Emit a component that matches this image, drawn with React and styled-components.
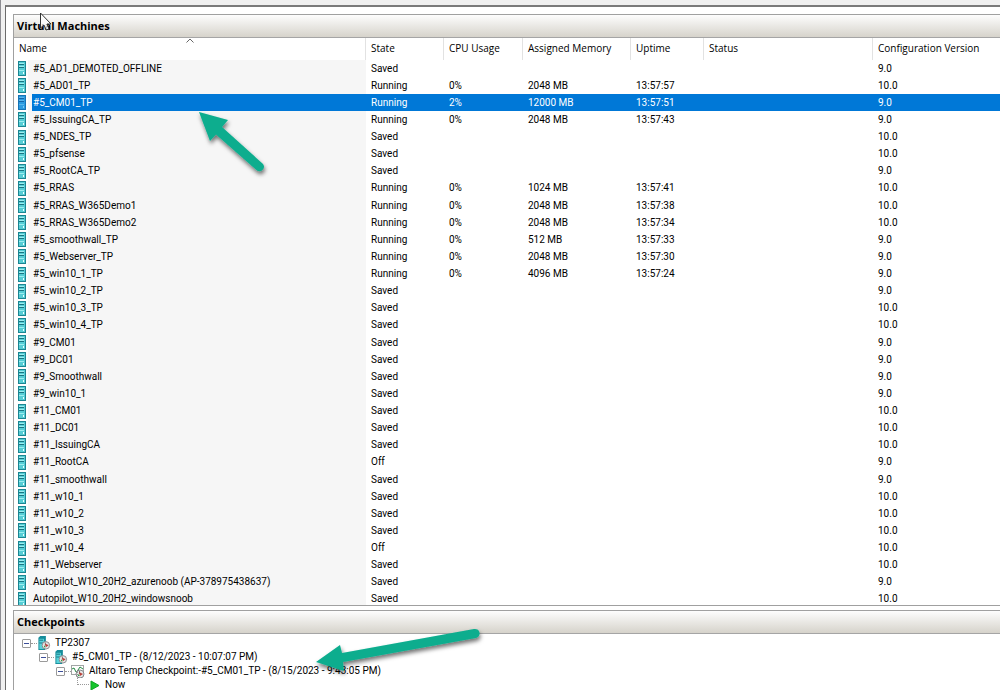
import React, { useState } from 'react';
import styled, { createGlobalStyle } from 'styled-components';

const GlobalStyle = createGlobalStyle`
  * {
    box-sizing: border-box;
  }
  body {
    margin: 0;
    overflow: hidden;
    background: #fff;
    color: #000;
    font: 10px/12px Roboto, "Liberation Sans", sans-serif;
  }
`;

const Shell = styled.div`
  position: relative;
  height: 100vh;
  overflow: hidden;
  padding: 5px 0 0 4px;
  background: #f0f0f0;
  border-left: 1px solid #8d8d92;
`;
const Workspace = styled.main`
  min-height: 100%;
  padding: 7px 0 0 7px;
  background: #fff;
  border-top: 2px solid #7a7a7a;
  border-left: 1px solid #6b6b6b;
`;
const Panel = styled.section`
  margin-bottom: 4px;
  border: 1px solid #a0a0a0;
  border-right: 0;
`;
const PanelTitle = styled.h2`
  height: 23px;
  margin: 0;
  padding: 0 3px;
  background: linear-gradient(#fdfdfd, #d6d3cb);
  border-bottom: 1px solid #a5a5a5;
  font: bold 11px/22px "Open Sans", "Noto Sans", sans-serif;
  color: #000;
`;

// the last row runs a little under the lower edge of the list
const ListView = styled.div`
  height: 567px;
  overflow: hidden;
`;
const Table = styled.table`
  width: 100%;
  height: 570px;
  table-layout: fixed;
  border-collapse: separate;
  border-spacing: 0;
`;
const HeadCell = styled.th`
  position: relative;
  height: 22px;
  padding: 0 5px;
  border-right: 1px solid #e2e2e2;
  font: 10px/20px "Open Sans", "Noto Sans", sans-serif;
  color: #000;
  text-align: left;
  vertical-align: top;
  white-space: nowrap;

  &:last-child {
    border-right: 0;
  }
`;
const SortMark = styled.svg`
  position: absolute;
  top: 0;
  left: 50%;
  width: 8px;
  height: 5px;
  margin-left: -4px;
`;
const Row = styled.tr`
  color: ${p => p.$selected ? '#fff' : '#000'};
  background: ${p => p.$selected ? '#0078d7' : '#fff'};
`;
const Cell = styled.td`
  padding: 0 5px;
  white-space: nowrap;
`;
const NameCell = styled(Cell)`
  padding: 0 1px;
  background: ${p => p.$selected ? '#0078d7' : '#f6f6f6'};
`;
const IconCell = styled.td`
  padding: 0 0 0 4px;
  background: linear-gradient(to right, #fff 14px, #f6f6f6 14px);

  svg {
    display: block;
  }
`;

const Tree = styled.ul`
  margin: 0;
  padding: 2px 0 0 8px;
  list-style: none;
`;
const Branch = styled.ul`
  margin: 0;
  padding: 0 0 0 17px;
  list-style: none;
`;
const Node = styled.div`
  display: flex;
  align-items: center;
  height: 14px;
  line-height: 10px;
  white-space: nowrap;
`;
const Toggle = styled.button`
  display: grid;
  place-items: center;
  width: 9px;
  height: 9px;
  padding: 0;
  border: 1px solid #9a9a9a;
  border-radius: 1px;
  background: #fff;

  &::before {
    content: '';
    width: 5px;
    height: 1px;
    background: #3c4f9a;
  }
`;
const Link = styled.span`
  width: 6px;
  border-top: 1px dotted #999;
`;
const Elbow = styled.span`
  width: 12px;
  height: 14px;
  margin: -14px 1px 0 4px;
  border: dotted #999;
  border-width: 0 0 1px 1px;
`;
const Label = styled.span`
  padding-left: 4px;
`;
const Overlay = styled.svg`
  position: absolute;
  top: 0;
  left: -1px;
  width: 1000px;
  height: 690px;
  pointer-events: none;
`;

const ServerIcon = ({ selected }) => (
  <svg width="8" height="15" viewBox="0 0 8 15">
    <rect width="8" height="15" fill={selected ? '#1673b5' : '#1b8592'}/>
    <rect x="1" y="1" width="6" height="13" fill={selected ? '#2b9be0' : '#56cdd5'}/>
    <path d="M1 3.500h5M1 6.500h5" stroke={selected ? '#1465a8' : '#187582'}/>
    <path d="M1 2.500h5M1 5.500h5M1 9.500h5" stroke={selected ? '#58b6ec' : '#9ceef0'}/>
    <rect x="5" y="11" width="1" height="2" fill={selected ? '#7cc8f4' : '#e8ffff'}/>
  </svg>
);

const Gauge = () => (
  <g>
    <circle cx="9" cy="10" r="4" fill="#e6e6e6" stroke="#85898c"/>
    <path d="M8.500 7v3" stroke="#777"/>
    <path d="M8 8l4 2-3 2z" fill="#b8413a"/>
    <path d="M7 10l2 2H7z" fill="#2c9b40"/>
  </g>
);

const HostIcon = () => (
  <svg width="14" height="14" viewBox="0 0 14 15">
    <path d="M1 2l2-2h6v13l-1 2H1z" fill="#168c9a"/>
    <path d="M2 3h5v11H2z" fill="#58d3da"/>
    <path d="M2 4.500h4M2 7.500h4" stroke="#147381"/>
    <Gauge/>
  </svg>
);

const CheckpointIcon = () => (
  <svg width="14" height="14" viewBox="0 0 14 14">
    <rect x=".5" y="1.500" width="12" height="9" fill="#fff" stroke="#a1a5a5"/>
    <path d="M1 5l2-1 2 4 2-2 2-3 3 2" fill="none" stroke="#238a43"/>
    <Gauge/>
  </svg>
);

// name, state, memory, uptime, version, cpu
const machines = [
  ['#5_AD1_DEMOTED_OFFLINE', 'Saved', '', '', '9.0'],
  ['#5_AD01_TP', 'Running', '2048 MB', '13:57:57', '10.0', '0%'],
  ['#5_CM01_TP', 'Running', '12000 MB', '13:57:51', '9.0', '2%'],
  ['#5_IssuingCA_TP', 'Running', '2048 MB', '13:57:43', '9.0', '0%'],
  ['#5_NDES_TP', 'Saved', '', '', '10.0'],
  ['#5_pfsense', 'Saved', '', '', '10.0'],
  ['#5_RootCA_TP', 'Saved', '', '', '9.0'],
  ['#5_RRAS', 'Running', '1024 MB', '13:57:41', '10.0', '0%'],
  ['#5_RRAS_W365Demo1', 'Running', '2048 MB', '13:57:38', '10.0', '0%'],
  ['#5_RRAS_W365Demo2', 'Running', '2048 MB', '13:57:34', '10.0', '0%'],
  ['#5_smoothwall_TP', 'Running', '512 MB', '13:57:33', '9.0', '0%'],
  ['#5_Webserver_TP', 'Running', '2048 MB', '13:57:30', '9.0', '0%'],
  ['#5_win10_1_TP', 'Running', '4096 MB', '13:57:24', '9.0', '0%'],
  ['#5_win10_2_TP', 'Saved', '', '', '9.0'],
  ['#5_win10_3_TP', 'Saved', '', '', '10.0'],
  ['#5_win10_4_TP', 'Saved', '', '', '10.0'],
  ['#9_CM01', 'Saved', '', '', '9.0'],
  ['#9_DC01', 'Saved', '', '', '9.0'],
  ['#9_Smoothwall', 'Saved', '', '', '9.0'],
  ['#9_win10_1', 'Saved', '', '', '9.0'],
  ['#11_CM01', 'Saved', '', '', '10.0'],
  ['#11_DC01', 'Saved', '', '', '10.0'],
  ['#11_IssuingCA', 'Saved', '', '', '10.0'],
  ['#11_RootCA', 'Off', '', '', '9.0'],
  ['#11_smoothwall', 'Saved', '', '', '9.0'],
  ['#11_w10_1', 'Saved', '', '', '10.0'],
  ['#11_w10_2', 'Saved', '', '', '10.0'],
  ['#11_w10_3', 'Saved', '', '', '10.0'],
  ['#11_w10_4', 'Off', '', '', '10.0'],
  ['#11_Webserver', 'Saved', '', '', '10.0'],
  ['Autopilot_W10_20H2_azurenoob (AP-378975438637)', 'Saved', '', '', '9.0'],
  ['Autopilot_W10_20H2_windowsnoob', 'Saved', '', '', '10.0'],
];

const TreeNode = ({ icon, text, children }) => {
  const [open, setOpen] = useState(true);
  return (
    <li>
      <Node>
        <Toggle aria-label={text} aria-expanded={open} onClick={() => setOpen(!open)}/>
        <Link/>
        {icon}
        <Label>{text}</Label>
      </Node>
      {open ? <Branch>{children}</Branch> : null}
    </li>
  );
};

const App = () => {
  const [selected, setSelected] = useState('#5_CM01_TP');

  return (
    <Shell>
      <GlobalStyle/>
      <Workspace>
        <Panel>
          <PanelTitle>Virtual Machines</PanelTitle>
          <ListView>
            <Table>
              <colgroup>
                <col width="18"/>
                <col width="334"/>
                <col width="78"/>
                <col width="79"/>
                <col width="108"/>
                <col width="73"/>
                <col width="169"/>
                <col/>
              </colgroup>
              <thead>
                <tr>
                  <HeadCell colSpan={2}>
                    Name
                    <SortMark viewBox="0 0 8 5"><path d="M.5 4.500L4 1l3.500 3.500" fill="none" stroke="#666"/></SortMark>
                  </HeadCell>
                  <HeadCell>State</HeadCell>
                  <HeadCell>CPU Usage</HeadCell>
                  <HeadCell>Assigned Memory</HeadCell>
                  <HeadCell>Uptime</HeadCell>
                  <HeadCell>Status</HeadCell>
                  <HeadCell>Configuration Version</HeadCell>
                </tr>
              </thead>
              <tbody>
                {machines.map(([name, state, memory, uptime, version, cpu]) => {
                  const active = name === selected;
                  return (
                    <Row key={name} $selected={active} onClick={() => setSelected(name)}>
                      <IconCell><ServerIcon selected={active}/></IconCell>
                      <NameCell $selected={active}>{name}</NameCell>
                      <Cell>{state}</Cell>
                      <Cell>{cpu}</Cell>
                      <Cell>{memory}</Cell>
                      <Cell>{uptime}</Cell>
                      <Cell/>
                      <Cell>{version}</Cell>
                    </Row>
                  );
                })}
              </tbody>
            </Table>
          </ListView>
        </Panel>

        <Panel>
          <PanelTitle>Checkpoints</PanelTitle>
          <Tree>
            <TreeNode icon={<HostIcon/>} text="TP2307">
              <TreeNode icon={<HostIcon/>} text="#5_CM01_TP - (8/12/2023 - 10:07:07 PM)">
                <TreeNode icon={<CheckpointIcon/>} text="Altaro Temp Checkpoint:-#5_CM01_TP - (8/15/2023 - 9:43:05 PM)">
                  <li>
                    <Node>
                      <Elbow/>
                      <svg width="11" height="11" viewBox="0 0 11 11"><path d="M1 1l8 4.500L1 10z" fill="#14c52c" stroke="#0fa324"/></svg>
                      <Label>Now</Label>
                    </Node>
                  </li>
                </TreeNode>
              </TreeNode>
            </TreeNode>
          </Tree>
        </Panel>
      </Workspace>

      <Overlay viewBox="0 0 1000 690">
        <defs>
          <filter id="drop" x="-20%" y="-20%" width="140%" height="150%">
            <feDropShadow dx="1" dy="3" stdDeviation="2" floodOpacity=".55"/>
          </filter>
        </defs>
        <g fill="#0aad8e" filter="url(#drop)">
          <path d="M199 112l29 8-6 7 41 37a4.500 4.500 0 0 1-6 6.500l-41-36-6 6.500z"/>
          <path d="M316 662l24-17 2 8 132-24a4.500 4.500 0 0 1 2 9L343 662l1 9z"/>
        </g>
        <path d="M40.500 13v15l3.500-3 2 5 3-1-2-5h4z" fill="#fff" fillOpacity=".7" stroke="#333"/>
      </Overlay>
    </Shell>
  );
};
export default App;
